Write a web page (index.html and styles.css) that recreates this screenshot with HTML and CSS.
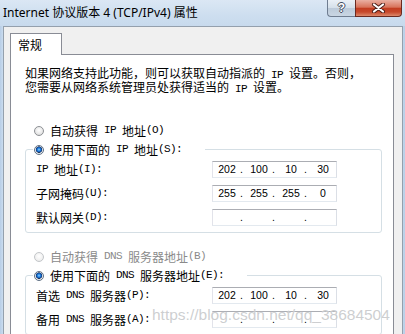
FILE: index.html
```html
<!DOCTYPE html>
<html lang="zh-CN">
<head>
<meta charset="utf-8">
<title>Internet 协议版本 4 (TCP/IPv4) 属性</title>
<link rel="stylesheet" href="styles.css">
</head>
<body>
<div class="window">
  <div class="titlebar">
    <span class="title">Internet 协议版本 4 (TCP/IPv4) 属性</span>
    <div class="caption-btns">
      <div class="cbtn help">?</div>
      <div class="cbtn close">
        <svg width="15" height="10" viewBox="0 0 15 10">
          <path d="M3 1.5 L12 8.5 M12 1.5 L3 8.5" stroke="#4b1e18" stroke-width="4" stroke-linecap="round" fill="none"/>
          <path d="M3 1.5 L12 8.5 M12 1.5 L3 8.5" stroke="#fff" stroke-width="2.2" stroke-linecap="round" fill="none"/>
        </svg>
      </div>
    </div>
  </div>
  <div class="client">
    <div class="tabs"><div class="tab">常规</div></div>
    <div class="panel">
      <p class="intro">如果网络支持此功能，则可以获取自动指派的<span class="en"> IP </span>设置。否则，<br>您需要从网络系统管理员处获得适当的<span class="en"> IP </span>设置。</p>

      <div class="radio-row first"><span class="radio"></span>自动获得<span class="en"> IP </span>地址<span class="en">(O)</span></div>
      <fieldset class="group">
        <legend class="legend legend-ip"><span class="radio-row in-legend"><span class="radio checked"></span>使用下面的<span class="en"> IP </span>地址<span class="en">(S):</span></span></legend>
        <div class="fields">
          <label class="lbl"><span class="en">IP </span>地址<span class="en">(I):</span></label>
          <div class="ip"><span>202</span><span class="dot">.</span><span>100</span><span class="dot">.</span><span>10</span><span class="dot">.</span><span>30</span></div>
          <label class="lbl">子网掩码<span class="en">(U):</span></label>
          <div class="ip"><span>255</span><span class="dot">.</span><span>255</span><span class="dot">.</span><span>255</span><span class="dot">.</span><span>0</span></div>
          <label class="lbl">默认网关<span class="en">(D):</span></label>
          <div class="ip"><span></span><span class="dot">.</span><span></span><span class="dot">.</span><span></span><span class="dot">.</span><span></span></div>
        </div>
      </fieldset>

      <div class="radio-row second disabled"><span class="radio"></span>自动获得<span class="en"> DNS </span>服务器地址<span class="en">(B)</span></div>
      <fieldset class="group">
        <legend class="legend legend-dns"><span class="radio-row in-legend"><span class="radio checked"></span>使用下面的<span class="en"> DNS </span>服务器地址<span class="en">(E):</span></span></legend>
        <div class="fields">
          <label class="lbl">首选<span class="en"> DNS </span>服务器<span class="en">(P):</span></label>
          <div class="ip"><span>202</span><span class="dot">.</span><span>100</span><span class="dot">.</span><span>10</span><span class="dot">.</span><span>30</span></div>
          <label class="lbl">备用<span class="en"> DNS </span>服务器<span class="en">(A):</span></label>
          <div class="ip"><span></span><span class="dot">.</span><span></span><span class="dot">.</span><span></span><span class="dot">.</span><span></span></div>
        </div>
      </fieldset>
    </div>
  </div>
  <div class="watermark">https://blog.csdn.net/qq_38684504</div>
</div>
</body>
</html>
```

FILE: styles.css
```css
html, body {
  margin: 0;
  padding: 0;
}
body {
  background: #c6d9ee;
  font-family: "Noto Sans CJK SC", sans-serif;
  font-size: 12px;
  color: #000;
}
.window {
  position: relative;
  width: 405px;
  height: 334px;
  overflow: hidden;
  background: linear-gradient(90deg, #b7cde6 0, #cadcef 3px, #cadcef 400px, #b9cfe7 405px);
}
.titlebar {
  height: 26px;
  display: flex;
  align-items: flex-start;
  padding-left: 3px;
  background: linear-gradient(180deg, #dbe7f4 0%, #cddeef 60%, #c8daed 100%);
}
.title {
  font-family: "Noto Sans", "Noto Sans CJK SC", sans-serif;
  font-size: 12px;
  line-height: 25px;
  color: #000;
  white-space: nowrap;
}
.caption-btns {
  margin-left: auto;
  margin-right: 3px;
  display: flex;
}
.cbtn {
  box-sizing: border-box;
  height: 17px;
  display: flex;
  align-items: center;
  justify-content: center;
}
.help {
  width: 28px;
  border: 1px solid #6f7d90;
  border-top: none;
  border-right: none;
  border-radius: 0 0 0 4px;
  background: linear-gradient(180deg, #eaf0f6 0%, #d5e0ea 48%, #bccad9 52%, #c9d6e3 100%);
  font-family: "Liberation Sans", sans-serif;
  font-weight: bold;
  font-size: 12px;
  color: #fff;
  text-shadow: 1px 0 0 #3f4c5e, -1px 0 0 #3f4c5e, 0 1px 0 #3f4c5e, 0 -1px 0 #3f4c5e;
}
.close {
  width: 47px;
  border: 1px solid #6a2a20;
  border-top: none;
  border-radius: 0 0 4px 0;
  background: linear-gradient(180deg, #eab0a2 0%, #d8735a 45%, #c23d20 52%, #c7492c 75%, #dd8a6c 100%);
}
.close svg {
  display: block;
}
.client {
  margin: 0 2px 0 3px;
  height: 320px;
  box-sizing: border-box;
  border: 1px solid #94a0ad;
  border-bottom: none;
  background: #f0f0f0;
  padding: 6px 0 0 6px;
}
.tabs {
  display: flex;
}
.tab {
  position: relative;
  z-index: 1;
  box-sizing: border-box;
  width: 52px;
  height: 22px;
  margin-bottom: -1px;
  border: 1px solid #898c95;
  border-bottom: none;
  background: #fff;
  padding-left: 7px;
  line-height: 21px;
  font-size: 12px;
}
.panel {
  margin-right: 8px;
  height: 300px;
  box-sizing: border-box;
  border: 1px solid #898c95;
  background: #fff;
  padding: 11px 10px 0 14px;
}
.intro {
  margin: 0;
  line-height: 14px;
  white-space: nowrap;
}
.en {
  font-family: "Liberation Mono", monospace;
  font-size: 11px;
  line-height: 1px;
  letter-spacing: -0.6px;
  white-space: pre;
}
.radio-row {
  display: flex;
  align-items: center;
  height: 19px;
  padding-left: 9px;
  white-space: nowrap;
}
.radio-row.first {
  margin-top: 27px;
}
.radio-row.second {
  margin-top: 14px;
}
.radio-row.in-legend {
  padding-left: 1px;
}
.radio-row.disabled {
  color: #8a8a8a;
}
.radio {
  flex: none;
  box-sizing: border-box;
  width: 10px;
  height: 10px;
  margin-right: 6px;
  border-radius: 50%;
  border: 1px solid #8d9094;
  background: radial-gradient(circle at 50% 40%, #ffffff 0%, #e9e9e9 55%, #cfcfcf 100%);
}
.radio.checked {
  border-color: #5f6f83;
  background: radial-gradient(circle at 50% 45%, #8fd3ff 0%, #2a8ae6 22%, #0d4fa8 42%, #23375a 50%, #dfe4ea 58%, #ffffff 100%);
}
.disabled .radio {
  border-color: #c3c6c9;
  background: radial-gradient(circle at 50% 40%, #ffffff 0%, #f1f1f1 60%, #e2e2e2 100%);
}
.group {
  box-sizing: border-box;
  width: 357px;
  margin: 0;
  padding: 0 0 6px 0;
  min-width: 0;
  border: 1px solid #d5dfe5;
  border-radius: 3px;
}
.legend {
  box-sizing: border-box;
  padding: 0;
  margin-left: 7px;
}
.legend-ip {
  width: 172px;
}
.legend-dns {
  width: 214px;
}
.fields {
  display: grid;
  grid-template-columns: 176px 125px;
  grid-auto-rows: 17px;
  row-gap: 7px;
  align-items: center;
  padding: 2px 0 0 10px;
}
.lbl {
  height: 17px;
  display: flex;
  align-items: center;
  white-space: nowrap;
}
.ip {
  box-sizing: border-box;
  width: 125px;
  height: 17px;
  padding-left: 1px;
  border: 1px solid;
  border-color: #abadb3 #dbdfe6 #e3e9ef #e2e3ea;
  background: #fff;
  display: grid;
  grid-template-columns: 26px 6px 26px 6px 26px 6px 26px;
  align-items: center;
  font-family: "Liberation Sans", sans-serif;
  font-size: 10.5px;
  line-height: 15px;
  color: #000;
}
.ip span {
  text-align: center;
}
.ip .dot {
  text-align: left;
}
.watermark {
  position: absolute;
  left: 152px;
  top: 306px;
  font-family: "Liberation Sans", sans-serif;
  font-size: 15.5px;
  line-height: 18px;
  color: rgba(196, 198, 200, 0.85);
  text-shadow: 0 0 1px rgba(255, 255, 255, 0.6);
  white-space: nowrap;
}
```
